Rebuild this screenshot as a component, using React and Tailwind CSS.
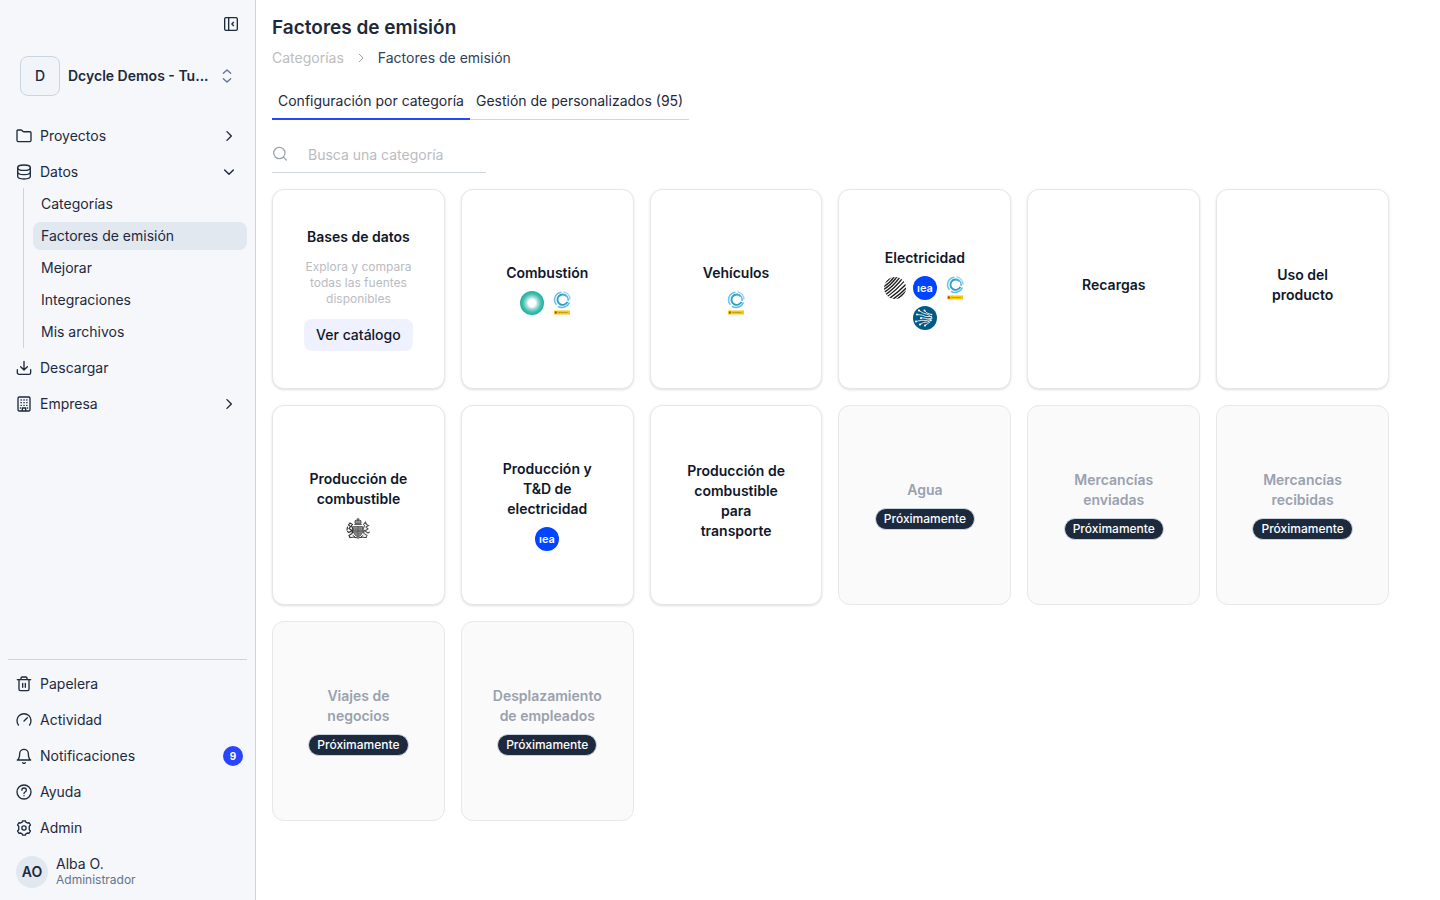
import { useState } from 'react'
import clsx from 'clsx'

const ICONS = {
  collapse: (
    <>
      <rect x="2.5" y="2.5" width="19" height="19" rx="2" />
      <path d="M8.5 2.5v19M15.8 9.5 13.3 12l2.5 2.5" />
    </>
  ),
  folder: <path d="M1.5 18.500V4.500a1.500 1.500 0 0 1 1.500-1.500h4.500a2 2 0 0 1 1.200.4l1.800 1.700a2 2 0 0 0 1.300.5H21a1.500 1.500 0 0 1 1.500 1.500V18.500A2 2 0 0 1 20.500 20.500h-17a2 2 0 0 1-2-2Z" />,
  database: (
    <>
      <ellipse cx="12" cy="5.5" rx="9.5" ry="4" />
      <path d="M2.5 5.5v13c0 2.200 4.200 4 9.500 4s9.500-1.800 9.500-4v-13" />
      <path d="M2.5 12c0 2.200 4.200 4 9.500 4s9.500-1.800 9.500-4" />
    </>
  ),
  download: <path d="M2 14.500v4.500a2.500 2.500 0 0 0 2.500 2.500h15A2.500 2.500 0 0 0 22 19v-4.500M12 2v12.500M7 10l5 5 5-5" />,
  building: (
    <>
      <rect x="3" y="1.500" width="18" height="21" rx="2" />
      <path d="M9.500 22v-4h5v4" />
      <path d="M7.500 6h.5M11.800 6h.5M16 6h.5M7.500 10h.5M11.800 10h.5M16 10h.5M7.500 14h.5M11.800 14h.5M16 14h.5M6.500 18h.5M17 18h.5" />
    </>
  ),
  trash: <path d="M2 5.500h20M4.500 5.500v14.500a2 2 0 0 0 2 2h11a2 2 0 0 0 2-2V5.500M7.500 5V3.500a2 2 0 0 1 2-2h5a2 2 0 0 1 2 2V5M10 11v6M14 11v6" />,
  gauge: <path d="M3.700 19.500A10.500 10.500 0 1 1 20.300 19.500M12 13.500l5-5" />,
  bell: <path d="M18.500 8.500a6.500 6.500 0 0 0-13 0c0 7-3.500 9.500-3.500 9.500h20s-3.500-2.500-3.500-9.500M13.800 22a2 2 0 0 1-3.600 0" />,
  help: (
    <>
      <circle cx="12" cy="12" r="10.500" />
      <path d="M8.800 9.200c0-4.200 6.700-4.200 6.700 0 0 3-3.500 2.600-3.500 5M12 17.500v.1" />
    </>
  ),
  gear: (
    <>
      <circle cx="12" cy="12" r="3.200" />
      <path d="m9.200 3.200.8-1.900h4l.8 1.900 2.300 1.300 2.600-.4 2 3.400-1.800 1.800v5.400l1.800 1.800-2 3.400-2.600-.4-2.300 1.300-.8 1.900h-4l-.8-1.900-2.300-1.300-2.600.4-2-3.400 1.800-1.800V9.300L2.300 7.500l2-3.400 2.600.4Z" />
    </>
  ),
  right: <path d="m8.500 4.500 7.500 7.500-7.500 7.500" />,
  down: <path d="m4.500 8.500 7.500 7.500 7.500-7.500" />,
  upDown: <path d="m6.500 8 5.500-5 5.500 5M6.500 16l5.500 5 5.500-5" />,
  search: <path d="M19.500 10.500a8.500 8.500 0 1 1-17 0 8.500 8.500 0 0 1 17 0ZM17.500 17l4 4" />,
}

function Icon({ name, className = 'size-4', stroke = 2 }) {
  return (
    <svg viewBox="0 0 24 24" fill="none" stroke="currentColor" strokeWidth={stroke} strokeLinecap="round" strokeLinejoin="round" className={clsx('shrink-0', className)} aria-hidden="true">
      {ICONS[name]}
    </svg>
  )
}

const LOGOS = {
  sun: (
    <>
      <defs>
        <radialGradient id="sun">
          <stop offset="0.300" stopColor="#ffffff" />
          <stop offset="0.480" stopColor="#a8e0d8" />
          <stop offset="0.750" stopColor="#45bfb0" />
          <stop offset="1" stopColor="#1fae9d" />
        </radialGradient>
      </defs>
      <circle cx="12" cy="12" r="12" fill="url(#sun)" />
    </>
  ),
  miteco: (
    <>
      <g fill="none">
        <path d="M11.500 1.300A7.500 7.500 0 0 0 6.500 13.800" stroke="#6cc5e8" strokeWidth="1.600" />
        <path d="M13.500.9A8 8 0 0 1 20 8.500" stroke="#8ed3ee" strokeWidth="1.400" />
        <path d="M16.500 5.200A5.200 5.200 0 1 0 17.400 10.800" stroke="#2c9fd0" strokeWidth="1.900" />
        <path d="M13.500 3.300A5.500 5.500 0 0 1 18 10" stroke="#55b5de" strokeWidth="1.400" />
        <path d="M8 15.300A8 8 0 0 0 19.500 11.500" stroke="#5bbbe2" strokeWidth="1.500" />
      </g>
      <rect x="4" y="19.500" width="16" height="4" fill="#fcc60b" />
      <rect x="5" y="20.500" width="1.800" height="2" fill="#b5322b" />
      <path d="M8.500 21.500h9" stroke="#b08d1c" strokeWidth=".9" strokeDasharray="2 .6" />
    </>
  ),
  globe: (
    <>
      <defs>
        <clipPath id="globe"><circle cx="12" cy="12" r="11" /></clipPath>
      </defs>
      <g clipPath="url(#globe)" fill="none" stroke="#1c1c1c" strokeWidth="1.350">
        <path d="M-2 9Q5 6 10-2M-2 12Q7 8 13-2M-2 15Q8 10 16-2M-2 18Q10 12 19-2M-1 21Q12 13 22-1M1 23Q14 14 24 2M3 25Q16 16 26 5M6 26Q18 18 27 8M9 27Q19 20 27 11M12 28Q21 21 28 14M16 28Q22 23 28 18" />
      </g>
    </>
  ),
  iea: (
    <>
      <circle cx="12" cy="12" r="12" fill="#0044ff" />
      <text x="12" y="15.500" textAnchor="middle" fontSize="11" fontWeight="600" fill="#fff">ıea</text>
    </>
  ),
  network: (
    <>
      <circle cx="12" cy="12" r="12" fill="#045a87" />
      <g fill="none" stroke="#e4f1f6" strokeWidth="0.900" strokeLinecap="round">
        <path d="M6 4.500 10 7l5 1.500 3 2.500M11.500 4.500 14 7l4 1.500M4 8.500 9 9l4 1.500h5M8 12h3l3 .8 5-.3M3 15.500l5-1.200 5 .2 5-1M7 18.500l3.500-2 4-.5 3-1.500M12 19.500l2.500-1.800 2.500-1.700" />
      </g>
      <g fill="#fff">
        <circle cx="6" cy="4.500" r="1.100" /><circle cx="11.500" cy="4.500" r="1" />
        <circle cx="4" cy="8.500" r="1" /><circle cx="8" cy="12" r="1" />
        <circle cx="3" cy="15.500" r="1" /><circle cx="7" cy="18.500" r="1.100" />
        <circle cx="12" cy="19.500" r="1" /><circle cx="18.500" cy="11" r=".8" />
        <circle cx="18.500" cy="8.500" r=".8" /><circle cx="18" cy="14.500" r=".8" />
      </g>
    </>
  ),
  arms: (
    <g fill="none" stroke="#444" strokeWidth="1" strokeLinecap="round">
      <path d="M9 6V3.800q1.500-1.200 3 0 1.500-1.200 3 0V6ZM12 3.500V1.500M11 2.200h2M8.700 7.500h6.600" strokeWidth=".9" fill="#999" />
      <path d="M7.500 9.500h9v5.500q-1 4-4.500 5-3.500-1-4.500-5Z" fill="#8b8b8b" stroke="#666" />
      <path d="M12 10v9M8.500 14h7M10 12h.2M14 12h.2M10 16h.2M14 16h.2" strokeWidth=".7" />
      <path d="M6.500 7.500 4 6 2.500 8l2 1.500-1.500 2 3 2-3 2-1.500-1M5.500 8.500l1.500 4-1 4-3 2 1 2M1.500 10l-.5 3M5 13l2 2.500" stroke="#333" strokeWidth="1.200" />
      <path d="m17.500 7.500 2-2.500 1 2.500 2 1-2.500 1.500 2 2-3 2 3 2 1.500-1M18.500 8.500l-1.500 4 1 4 3 2-1 2M19 13l-2 2.500" stroke="#555" strokeWidth="1.100" />
      <path d="M4 20.500q4-1 8 .5 4-1.500 8-.5M7 18.500l2 1.500M17 18.500 15 20" stroke="#333" />
    </g>
  ),
}

const LOGO_NAMES = {
  sun: 'DEFRA',
  miteco: 'MITECO',
  globe: 'AIB',
  iea: 'IEA',
  network: 'Red eléctrica',
  arms: 'Gobierno británico',
}

const CATEGORIES = [
  { title: 'Combustión', logos: ['sun', 'miteco'] },
  { title: 'Vehículos', logos: ['miteco'] },
  { title: 'Electricidad', logos: ['globe', 'iea', 'miteco', 'network'] },
  { title: 'Recargas' },
  { title: 'Uso del producto' },
  { title: 'Producción de combustible', logos: ['arms'] },
  { title: 'Producción y T&D de electricidad', logos: ['iea'] },
  { title: 'Producción de combustible para transporte' },
  { title: 'Agua', soon: true },
  { title: 'Mercancías enviadas', soon: true },
  { title: 'Mercancías recibidas', soon: true },
  { title: 'Viajes de negocios', soon: true },
  { title: 'Desplazamiento de empleados', soon: true },
]

const DATA_LINKS = ['Categorías', 'Factores de emisión', 'Mejorar', 'Integraciones', 'Mis archivos']

const FOOTER_LINKS = [
  { icon: 'trash', label: 'Papelera' },
  { icon: 'gauge', label: 'Actividad' },
  { icon: 'bell', label: 'Notificaciones', count: 9 },
  { icon: 'help', label: 'Ayuda' },
  { icon: 'gear', label: 'Admin' },
]

const TABS = ['Configuración por categoría', 'Gestión de personalizados (95)']

function NavLink({ icon, label, count }) {
  return (
    <a href="#" className="flex h-8 items-center gap-2 rounded-lg pl-2 pr-1 hover:bg-slate-200">
      <Icon name={icon} />
      <span className="flex-1">{label}</span>
      {count && (
        <span className="flex size-5 items-center justify-center rounded-full bg-[#2a44ff] text-[10px] font-bold text-white">{count}</span>
      )}
    </a>
  )
}

function NavGroup({ icon, label, open, onClick }) {
  return (
    <button type="button" aria-expanded={open} onClick={onClick} className="flex h-8 w-full items-center gap-2 rounded-lg px-2 text-left hover:bg-slate-200">
      <Icon name={icon} />
      <span className="flex-1">{label}</span>
      <span className="flex w-5 justify-center">
        <Icon name={open ? 'down' : 'right'} className="size-3.5" stroke={2.4} />
      </span>
    </button>
  )
}

function Sidebar() {
  const [open, setOpen] = useState({ datos: true })
  const toggle = (key) => setOpen((prev) => ({ ...prev, [key]: !prev[key] }))

  return (
    <aside className="flex w-64 shrink-0 flex-col border-r border-slate-300 bg-[#f5f7fb] px-2">
      <div className="flex h-12 items-center justify-end pr-2">
        <button type="button" aria-label="Contraer menú"><Icon name="collapse" /></button>
      </div>
      <button type="button" className="mt-2 flex items-center gap-2 px-3 text-left">
        <span className="flex size-10 shrink-0 items-center justify-center rounded-lg border border-slate-300 bg-slate-100 font-medium">D</span>
        <span className="flex-1 whitespace-nowrap font-semibold">Dcycle Demos - Tu...</span>
        <Icon name="upDown" className="size-4 text-slate-500" />
      </button>

      <nav className="mt-6 flex flex-1 flex-col gap-1">
        <NavGroup icon="folder" label="Proyectos" open={!!open.proyectos} onClick={() => toggle('proyectos')} />
        <div>
          <NavGroup icon="database" label="Datos" open={open.datos} onClick={() => toggle('datos')} />
          {open.datos && (
            <ul className="ml-[15px] flex flex-col gap-1 border-l border-slate-300 py-0.5 pl-[9px]">
              {DATA_LINKS.map((label) => (
                <li key={label}>
                  <a href="#" className={clsx('flex h-7 items-center rounded-lg px-2', label === 'Factores de emisión' && 'bg-slate-200')}>{label}</a>
                </li>
              ))}
            </ul>
          )}
        </div>
        <NavLink icon="download" label="Descargar" />
        <NavGroup icon="building" label="Empresa" open={!!open.empresa} onClick={() => toggle('empresa')} />
      </nav>

      <div className="flex flex-col gap-1 border-t border-slate-300 pt-2">
        {FOOTER_LINKS.map((link) => <NavLink key={link.label} {...link} />)}
      </div>
      <button type="button" className="my-3 flex items-center gap-2 px-2 text-left">
        <span className="flex size-8 items-center justify-center rounded-full bg-slate-200 font-semibold">AO</span>
        <span className="flex flex-col">
          <span className="leading-4">Alba O.</span>
          <span className="text-xs text-slate-500">Administrador</span>
        </span>
      </button>
    </aside>
  )
}

function Card({ title, logos = [], soon }) {
  return (
    <li
      className={clsx(
        'flex h-50 flex-col items-center justify-center gap-2 rounded-xl border border-gray-200 px-9 text-center',
        soon ? 'bg-[#fafafa] text-gray-400' : 'bg-white text-slate-900 shadow-sm'
      )}
    >
      <h2 className="font-semibold">{title}</h2>
      {soon ? (
        <span className="rounded-full border border-slate-300 bg-slate-800 px-2 py-0.5 text-xs font-medium text-white">Próximamente</span>
      ) : (
        <div className="flex flex-wrap justify-center gap-1.5">
          {logos.map((name) => (
            <svg key={name} viewBox="0 0 24 24" className="size-6" role="img" aria-label={LOGO_NAMES[name]}>{LOGOS[name]}</svg>
          ))}
        </div>
      )}
    </li>
  )
}

export default function App() {
  const [tab, setTab] = useState(TABS[0])
  const [query, setQuery] = useState('')
  const visible = CATEGORIES.filter((c) => c.title.toLowerCase().includes(query.toLowerCase()))

  return (
    <div className="flex min-h-screen bg-white font-['Inter',sans-serif] text-sm text-slate-800">
      <Sidebar />
      <main className="min-w-0 flex-1 pl-4 pr-[51px] pt-3.5">
        <h1 className="text-[19px] leading-7 font-semibold">Factores de emisión</h1>
        <nav aria-label="Ruta" className="mt-1.5 flex items-center gap-[11px]">
          <a href="#" className="text-[#bdbdbd]">Categorías</a>
          <Icon name="right" className="size-3 text-gray-400" />
          <span className="text-slate-700">Factores de emisión</span>
        </nav>

        <div role="tablist" className="mt-4 flex">
          {TABS.map((label) => (
            <button
              key={label}
              type="button"
              role="tab"
              aria-selected={tab === label}
              onClick={() => setTab(label)}
              className={clsx('h-9 px-1.5', tab === label ? 'border-b-2 border-[#2a44ff]' : 'border-b border-gray-300 pb-px')}
            >
              {label}
            </button>
          ))}
        </div>

        <label className="mt-4 flex h-[37px] w-[214px] items-center gap-5 border-b border-gray-300">
          <Icon name="search" className="size-4 text-gray-400" stroke={1.8} />
          <input
            type="text"
            aria-label="Busca una categoría"
            placeholder="Busca una categoría"
            value={query}
            onChange={(e) => setQuery(e.target.value)}
            className="min-w-0 flex-1 pt-0.5 outline-none placeholder:text-[#b9bcc2]"
          />
        </label>

        <ul className="mt-4 grid grid-cols-6 gap-4">
          <li className="flex h-50 flex-col items-center justify-center gap-3 rounded-xl border border-gray-200 bg-white px-8 text-center text-slate-900 shadow-sm">
            <h2 className="font-semibold">Bases de datos</h2>
            <p className="text-xs text-[#b9bcc2]">Explora y compara todas las fuentes disponibles</p>
            <button type="button" className="h-8 whitespace-nowrap rounded-lg bg-[#eff1ff] px-3 font-medium">Ver catálogo</button>
          </li>
          {visible.map((category) => <Card key={category.title} {...category} />)}
        </ul>
      </main>
    </div>
  )
}
